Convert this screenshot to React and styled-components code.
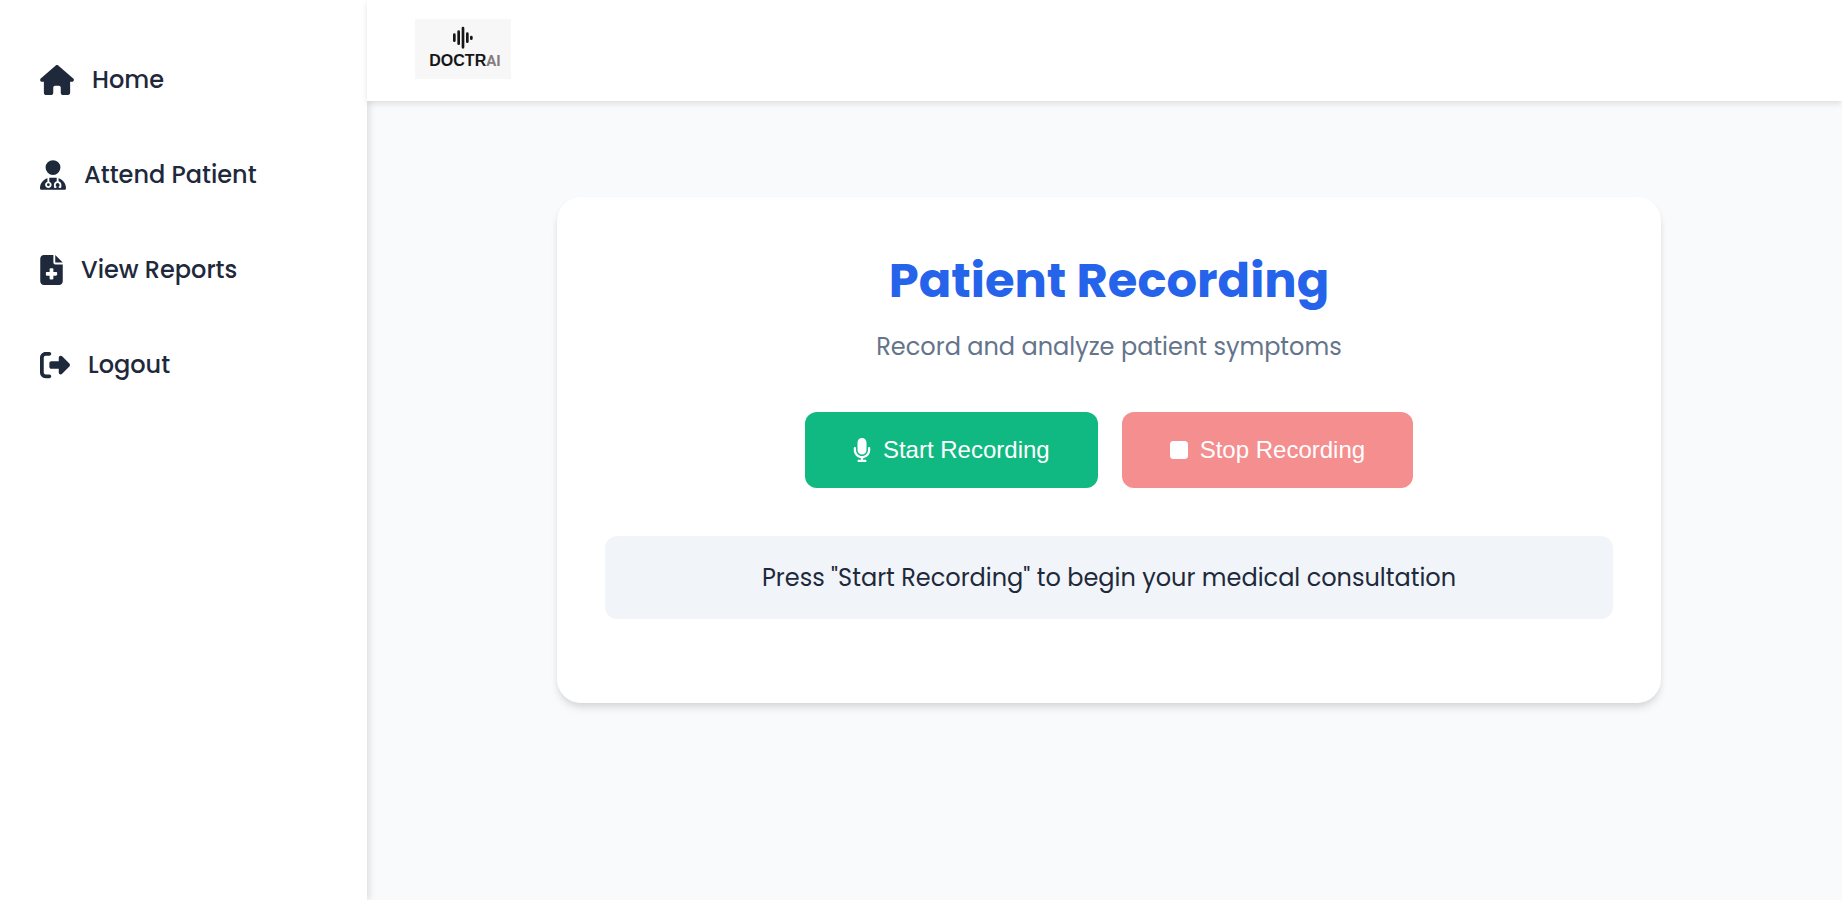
import React from "react";
import styled, { createGlobalStyle } from "styled-components";
import {
  FaHouse,
  FaUserDoctor,
  FaFileMedical,
  FaRightFromBracket,
  FaMicrophone,
  FaStop,
} from "react-icons/fa6";

const GlobalStyle = createGlobalStyle`
  *, *::before, *::after { box-sizing: border-box; }
  body {
    margin: 0;
    background: #f8fafc;
    color: #1e293b;
    font-family: Poppins, Inter, "Open Sans", sans-serif;
    font-size: 24px;
  }
`;

const Shell = styled.div`
  display: grid;
  grid-template-columns: 367px minmax(0, 1fr);
  min-height: 100vh;
`;

const Sidebar = styled.aside`
  padding: 56px 40px;
  background: #fff;
  box-shadow: 3px 0 6px rgba(0, 0, 0, 0.1);
`;

const NavList = styled.ul`
  display: flex;
  flex-direction: column;
  gap: 47px;
  margin: 0;
  padding: 0;
  list-style: none;
`;

const NavLink = styled.a`
  display: flex;
  align-items: center;
  gap: 18px;
  color: #1e293b;
  font-size: 24px;
  font-weight: 500;
  line-height: 48px;
  text-decoration: none;

  svg {
    flex: none;
    width: ${({ $iconWidth }) => $iconWidth}px;
    height: 30px;
  }
`;

const Page = styled.div`
  display: flex;
  flex-direction: column;
`;

const Header = styled.header`
  position: relative;
  display: flex;
  min-height: 101px;
  padding: 19px 48px;
  background: #fff;
  box-shadow: 0 3px 6px rgba(0, 0, 0, 0.1);
`;

const Logo = styled.a`
  display: flex;
  flex-direction: column;
  align-items: center;
  width: 96px;
  height: 60px;
  padding-top: 7px;
  background: #f7f7f7;
  color: #161616;
  text-decoration: none;
`;

const LogoName = styled.span`
  display: flex;
  align-items: baseline;
  padding-left: 4px;
  font: bold 16px/24px "Liberation Sans", Arial, sans-serif;
`;

const LogoSuffix = styled.span`
  color: #857d7d;
  font-family: Roboto, sans-serif;
  font-size: 15px;
`;

const Main = styled.main`
  width: 100%;
  max-width: 1209px;
  margin: 0 auto;
  padding: 96px 48px 48px 57px;
`;

const Card = styled.section`
  display: flex;
  flex-direction: column;
  align-items: center;
  padding: 48px 48px 84px;
  border-radius: 24px;
  background: #fff;
  box-shadow: 0 6px 9px -1px rgba(0, 0, 0, 0.1), 0 3px 6px -1px rgba(0, 0, 0, 0.06);
  text-align: center;
`;

const Title = styled.h1`
  margin: 0 0 12px;
  color: #2563eb;
  font-size: 48px;
  font-weight: 700;
  line-height: 72px;
`;

const Subtitle = styled.p`
  margin: 0 0 47px;
  color: #64748b;
  font-size: 24px;
  line-height: 36px;
`;

const Actions = styled.div`
  display: flex;
  flex-wrap: wrap;
  justify-content: center;
  gap: 24px;
  margin-bottom: 48px;
`;

const ActionButton = styled.button`
  display: flex;
  align-items: center;
  gap: 12px;
  padding: 24px 48px;
  border: 0;
  border-radius: 12px;
  background: ${({ $color }) => $color};
  color: #fff;
  font: 24px/28px "Liberation Sans", Arial, sans-serif;
  cursor: pointer;

  &:disabled {
    opacity: 0.6;
    cursor: not-allowed;
  }

  svg {
    flex: none;
    width: 18px;
    height: 24px;
  }
`;

const Status = styled.p`
  width: 100%;
  margin: 0;
  padding: 24px;
  border-radius: 12px;
  background: #f1f5f9;
  font-size: 24px;
  line-height: 35px;
`;

const navItems = [
  { label: "Home", Icon: FaHouse, iconWidth: 34 },
  { label: "Attend Patient", Icon: FaUserDoctor, iconWidth: 26 },
  { label: "View Reports", Icon: FaFileMedical, iconWidth: 23 },
  { label: "Logout", Icon: FaRightFromBracket, iconWidth: 30 },
];

function LogoMark() {
  return (
    <svg width="20" height="23" viewBox="0 0 60 69" aria-hidden="true">
      <g stroke="#161616" strokeWidth="8" strokeLinecap="round">
        <path d="M4 26v18M17 17v36M30 6v58" />
        <path d="M43 23v24" />
        <path d="M55 33v5" />
      </g>
    </svg>
  );
}

export default function App() {
  return (
    <>
      <GlobalStyle />
      <Shell>
        <Sidebar>
          <nav>
            <NavList>
              {navItems.map(({ label, Icon, iconWidth }) => (
                <li key={label}>
                  <NavLink href="#" $iconWidth={iconWidth}>
                    <Icon aria-hidden="true" />
                    {label}
                  </NavLink>
                </li>
              ))}
            </NavList>
          </nav>
        </Sidebar>
        <Page>
          <Header>
            <Logo href="#">
              <LogoMark />
              <LogoName>
                DOCTR<LogoSuffix>AI</LogoSuffix>
              </LogoName>
            </Logo>
          </Header>
          <Main>
            <Card>
              <Title>Patient Recording</Title>
              <Subtitle>Record and analyze patient symptoms</Subtitle>
              <Actions>
                <ActionButton type="button" $color="#10b981">
                  <FaMicrophone aria-hidden="true" />
                  Start Recording
                </ActionButton>
                <ActionButton type="button" $color="#ef4444" disabled>
                  <FaStop aria-hidden="true" />
                  Stop Recording
                </ActionButton>
              </Actions>
              <Status role="status">
                Press "Start Recording" to begin your medical consultation
              </Status>
            </Card>
          </Main>
        </Page>
      </Shell>
    </>
  );
}
